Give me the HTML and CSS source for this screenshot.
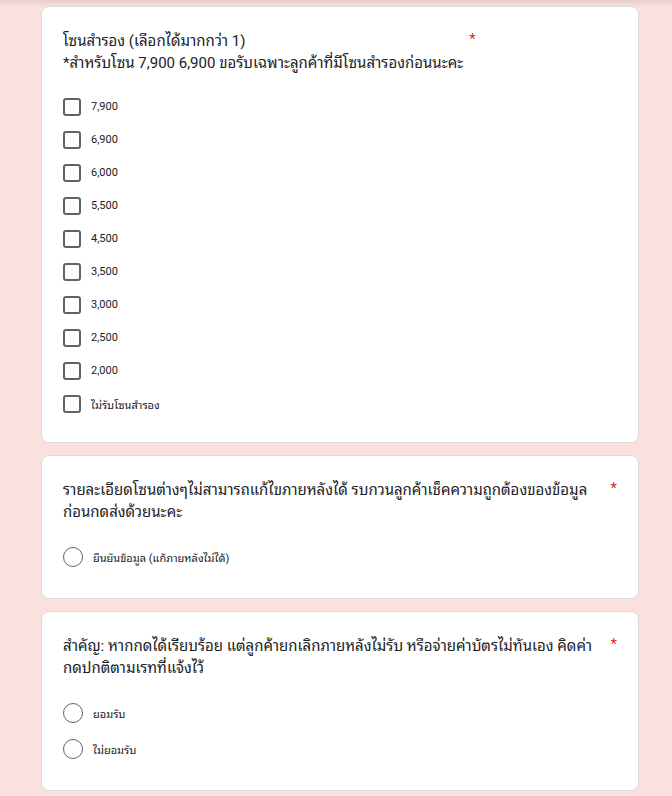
FILE: index.html
```html
<!DOCTYPE html>
<html lang="th">

<head>
    <meta charset="UTF-8">
    <meta name="viewport" content="width=device-width, initial-scale=1.0">
    <title>แบบฟอร์มจองบัตร</title>
    <link rel="stylesheet" href="styles.css">
</head>

<body>
    <div class="form-container">
        <!-- Question 1: backup zones -->
        <div class="question-card">
            <div class="question-title">
                <div class="title-text">โซนสำรอง (เลือกได้มากกว่า 1)<br>*สำหรับโซน 7,900 6,900 ขอรับเฉพาะลูกค้าที่มีโซนสำรองก่อนนะคะ</div>
                <span class="required">*</span>
            </div>
            <div class="options">
                <label class="option checkbox-option"><span class="checkbox"></span><span class="option-label">7,900</span></label>
                <label class="option checkbox-option"><span class="checkbox"></span><span class="option-label">6,900</span></label>
                <label class="option checkbox-option"><span class="checkbox"></span><span class="option-label">6,000</span></label>
                <label class="option checkbox-option"><span class="checkbox"></span><span class="option-label">5,500</span></label>
                <label class="option checkbox-option"><span class="checkbox"></span><span class="option-label">4,500</span></label>
                <label class="option checkbox-option"><span class="checkbox"></span><span class="option-label">3,500</span></label>
                <label class="option checkbox-option"><span class="checkbox"></span><span class="option-label">3,000</span></label>
                <label class="option checkbox-option"><span class="checkbox"></span><span class="option-label">2,500</span></label>
                <label class="option checkbox-option"><span class="checkbox"></span><span class="option-label">2,000</span></label>
                <label class="option checkbox-option"><span class="checkbox"></span><span class="option-label">ไม่รับโซนสำรอง</span></label>
            </div>
        </div>

        <!-- Question 2: confirm details -->
        <div class="question-card radio-card">
            <div class="question-title">
                <div class="title-text">รายละเอียดโซนต่างๆไม่สามารถแก้ไขภายหลังได้ รบกวนลูกค้าเช็คความถูกต้องของข้อมูลก่อนกดส่งด้วยนะคะ</div>
                <span class="required">*</span>
            </div>
            <div class="options">
                <label class="option radio-option"><span class="radio"></span><span class="option-label">ยืนยันข้อมูล (แก้ภายหลังไม่ได้)</span></label>
            </div>
        </div>

        <!-- Question 3: cancellation policy -->
        <div class="question-card radio-card">
            <div class="question-title">
                <div class="title-text">สำคัญ: หากกดได้เรียบร้อย แต่ลูกค้ายกเลิกภายหลังไม่รับ หรือจ่ายค่าบัตรไม่ทันเอง คิดค่ากดปกติตามเรทที่แจ้งไว้</div>
                <span class="required">*</span>
            </div>
            <div class="options">
                <label class="option radio-option"><span class="radio"></span><span class="option-label">ยอมรับ</span></label>
                <label class="option radio-option"><span class="radio"></span><span class="option-label">ไม่ยอมรับ</span></label>
            </div>
        </div>
    </div>
</body>

</html>
```

FILE: styles.css
```css
* {
    margin: 0;
    padding: 0;
    box-sizing: border-box;
    font-family: Roboto, "Noto Sans", "Noto Sans Thai Looped", Tahoma, Loma, Garuda, "Noto Sans Thai", sans-serif;
}

body {
    background: linear-gradient(to bottom, #e8cfcd 0, #fae1df 7px) top / 100% 7px no-repeat, #fae1df;
    padding-top: 6px;
}

.form-container {
    width: 598px;
    margin-left: 41px;
}

.question-card {
    background-color: #fff;
    border: 1px solid #dadce0;
    border-radius: 8px;
    padding: 23px 21px 22px;
    margin-bottom: 12px;
}

.radio-card {
    padding-bottom: 23px;
}

.question-title {
    display: flex;
    align-items: flex-start;
    font-size: 15px;
    line-height: 22px;
    color: #202124;
}

.title-text {
    flex: 0 1 auto;
}

.required {
    flex: none;
    color: #d93025;
    padding-left: 6px;
    line-height: 18px;
}

.options {
    margin-top: 16px;
}

.option {
    display: flex;
    align-items: center;
    gap: 10px;
    cursor: pointer;
}

.checkbox-option {
    height: 33px;
}

.radio-option {
    height: 36px;
}

.checkbox {
    width: 18px;
    height: 18px;
    border: 2px solid #5f6368;
    border-radius: 3px;
    flex: none;
}

.radio {
    width: 20px;
    height: 20px;
    border: 1.5px solid #5f6368;
    border-radius: 50%;
    flex: none;
}

.option-label {
    font-size: 11px;
    color: #202124;
}
```
